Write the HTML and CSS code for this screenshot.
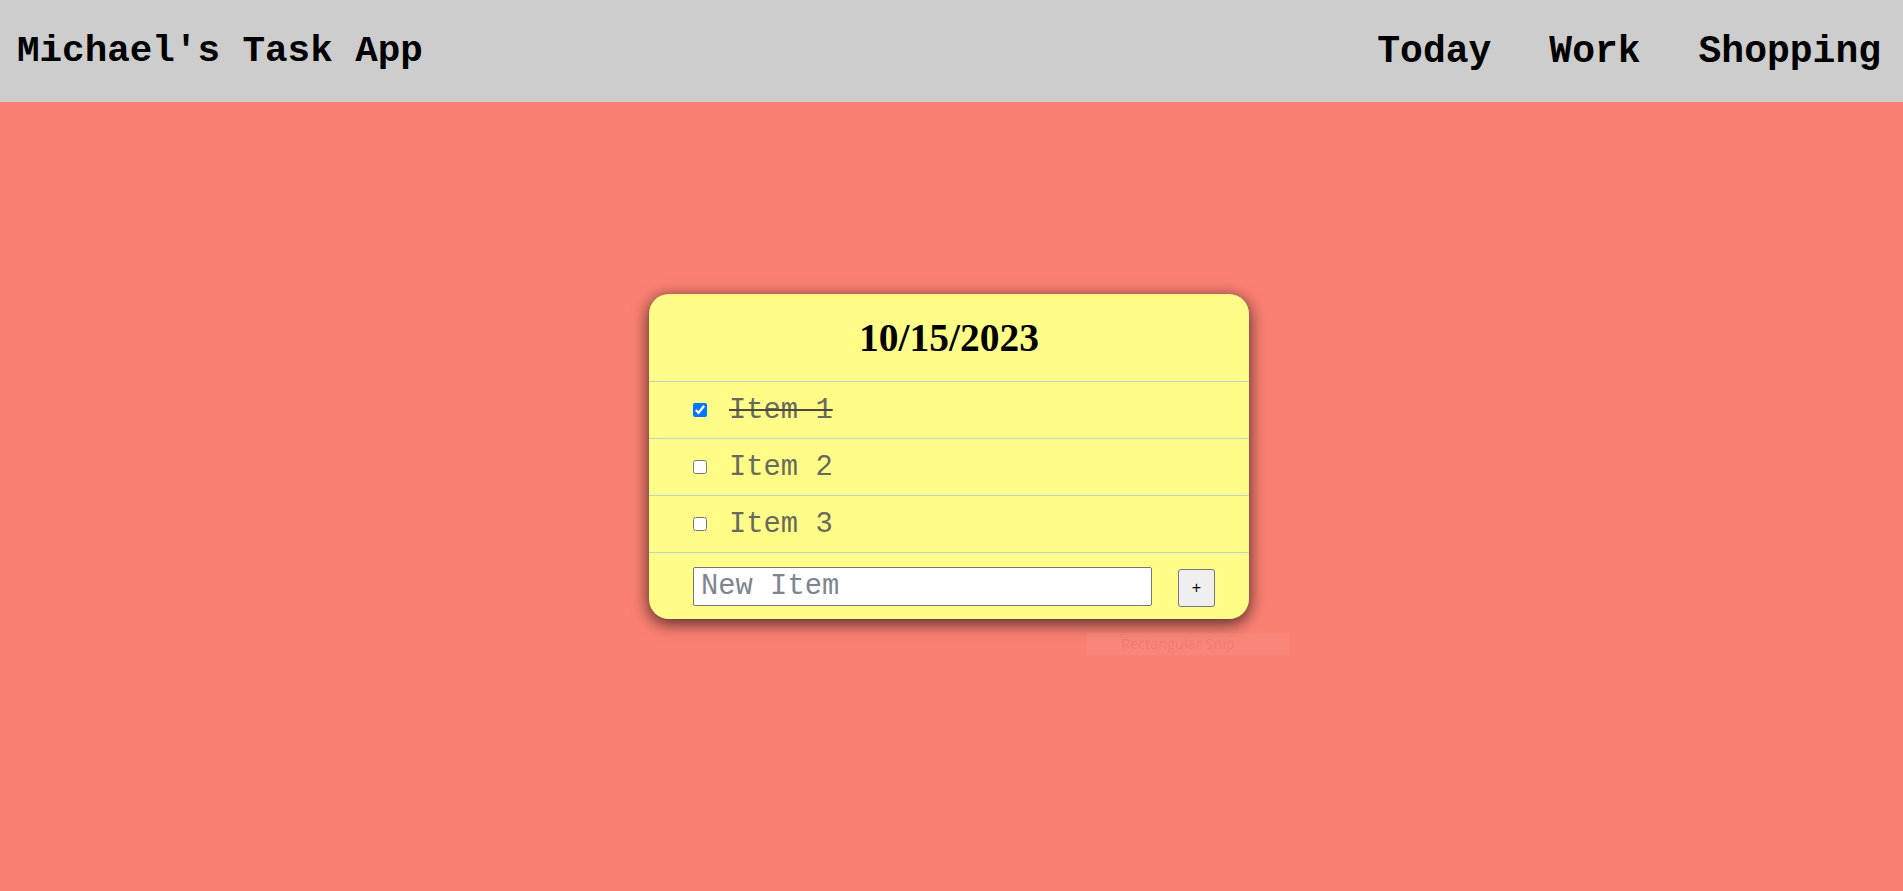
FILE: index.html
```html
<!DOCTYPE html>
<html lang="en">
<head>
<meta charset="utf-8">
<title>Michael's Task App</title>
<link rel="stylesheet" href="styles.css">
</head>
<body>
<header class="topbar">
  <div class="brand">Michael's Task App</div>
  <nav class="nav">
    <a class="nav-link" href="#">Today</a>
    <a class="nav-link" href="#">Work</a>
    <a class="nav-link" href="#">Shopping</a>
  </nav>
</header>
<main class="main">
  <section class="card">
    <div class="card-head">
      <h1 class="card-date">10/15/2023</h1>
    </div>
    <div class="item">
      <input class="check" type="checkbox" checked>
      <span class="item-text done">Item 1</span>
    </div>
    <div class="item">
      <input class="check" type="checkbox">
      <span class="item-text">Item 2</span>
    </div>
    <div class="item">
      <input class="check" type="checkbox">
      <span class="item-text">Item 3</span>
    </div>
    <form class="add-row">
      <input class="new-item" type="text" placeholder="New Item">
      <button class="add-btn" type="button">+</button>
    </form>
  </section>
</main>
<div class="snip">Rectangular Snip</div>
</body>
</html>
```

FILE: styles.css
```css
html, body {
  margin: 0;
  padding: 0;
  height: 100%;
}

body {
  background: #fa8072;
  font-family: "Liberation Mono", "Courier New", monospace;
  overflow: hidden;
}

.topbar {
  height: 102px;
  box-sizing: border-box;
  background: #cdcdcd;
  display: flex;
  align-items: center;
  justify-content: space-between;
  padding: 0 22px 0 17px;
}

.brand {
  font-size: 37.6px;
  font-weight: bold;
  color: #000;
}

.nav {
  display: flex;
  gap: 58px;
}

.nav-link {
  font-size: 38px;
  font-weight: bold;
  color: #000;
  text-decoration: none;
}

.main {
  display: flex;
  justify-content: center;
  padding: 192px 5px 0 0;
}

.card {
  width: 600px;
  background: #fffd88;
  border-radius: 20px;
  box-shadow: 0 4px 16px 1px rgba(0, 0, 0, 0.65);
  overflow: hidden;
}

.card-head {
  height: 88px;
  box-sizing: border-box;
  padding-top: 21px;
  border-bottom: 1px solid #bcd6cf;
}

.card-date {
  margin: 0;
  text-align: center;
  font-family: "Liberation Serif", "Times New Roman", serif;
  font-weight: bold;
  font-size: 39.5px;
  line-height: 46px;
  color: #000;
}

.item {
  height: 57px;
  box-sizing: border-box;
  border-bottom: 1px solid #bcd6cf;
  display: flex;
  align-items: center;
  gap: 22px;
  padding-left: 44px;
}

.check {
  width: 14px;
  height: 14px;
  margin: 0;
}

.item-text {
  font-size: 28.8px;
  color: #6a6a5c;
}

.item-text.done {
  text-decoration: line-through;
  text-decoration-color: #4a4a40;
}

.add-row {
  height: 66px;
  box-sizing: border-box;
  margin: 0;
  display: flex;
  align-items: flex-start;
  gap: 26px;
  padding: 14px 34px 0 44px;
}

.new-item {
  width: 459px;
  height: 39px;
  box-sizing: border-box;
  margin: 0;
  padding: 1px 7px;
  border: 1px solid #767676;
  border-radius: 2px;
  background: #fff;
  font-family: "Liberation Mono", "Courier New", monospace;
  font-size: 28.8px;
  color: #000;
}

.new-item::placeholder {
  color: #7d8590;
}

.add-btn {
  width: 37px;
  height: 38px;
  margin: 2px 0 0 0;
  padding: 0;
  border: 1px solid #767676;
  border-radius: 3px;
  background: #efefef;
  font-family: "Liberation Sans", Arial, sans-serif;
  font-size: 16px;
  color: #000;
}

.snip {
  position: absolute;
  left: 1086px;
  top: 633px;
  width: 203px;
  height: 22px;
  box-sizing: border-box;
  padding-left: 35px;
  background: rgba(255, 255, 255, 0.05);
  color: rgba(0, 0, 0, 0.08);
  font-family: "Open Sans", "Liberation Sans", sans-serif;
  font-size: 14.5px;
  line-height: 22px;
}
```
